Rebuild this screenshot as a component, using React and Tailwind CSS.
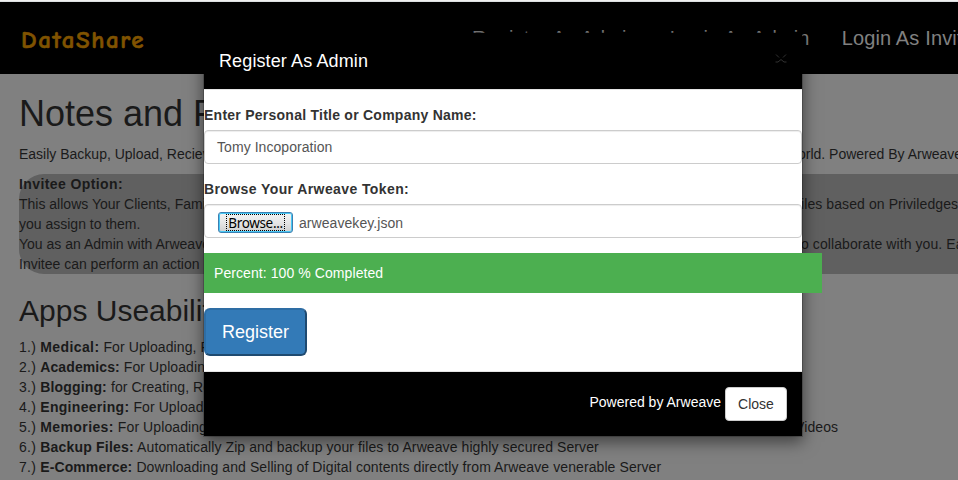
const NAV_LINKS = ["Register As Admin", "Login As Admin", "Login As Invitee"]

const INVITEE_LINES = [
  { start: "This allows Your Clients, Family, Friends", end: "files based on Priviledges" },
  { start: "you assign to them." },
  { start: "You as an Admin with Arweave Token", end: "to collaborate with you. Each" },
  { start: "Invitee can perform an action" },
]

const USES = [
  { name: "Medical:", text: "For Uploading, Recieving", tracking: "tracking-[0.4px]" },
  { name: "Academics:", text: "For Uploading", tracking: "tracking-[0.1px]" },
  { name: "Blogging:", text: "for Creating, Reading", tracking: "tracking-[0.15px]" },
  { name: "Engineering:", text: "For Uploading", tracking: "tracking-[0.3px]" },
  { name: "Memories:", text: "For Uploading", end: "Videos", tracking: "tracking-[0.4px]" },
  {
    name: "Backup Files:",
    text: "Automatically Zip and backup your files to Arweave highly secured Server",
    tracking: "tracking-[0.2px]",
  },
  {
    name: "E-Commerce:",
    text: "Downloading and Selling of Digital contents directly from Arweave venerable Server",
    tracking: "tracking-[0.1px]",
  },
]

function Navbar() {
  return (
    <nav className="h-[72px] bg-black flex items-start text-[#808080]">
      <div className="w-[472px] shrink-0 pl-[21px] pt-[22px]">
        <span className="inline-block font-['Comic_Sans_MS','Comic_Neue','Lato',sans-serif] font-bold text-[25px] leading-8 tracking-[1.6px] text-[#805300] [-webkit-text-stroke:0.6px_#805300]">
          DataShare
        </span>
      </div>
      <div className="flex gap-8 pt-[22px] text-[20px] leading-7 tracking-[0.14px] whitespace-nowrap">
        {NAV_LINKS.map((link) => (
          <a key={link}>{link}</a>
        ))}
      </div>
    </nav>
  )
}

function PageContent() {
  return (
    <main className="pl-[19px] whitespace-nowrap tracking-[0.09px]">
      <h1 className="pt-5 mb-[10px] text-[36px] leading-10 tracking-normal">Notes and Files</h1>
      <div className="flex">
        <p className="w-[766px] shrink-0 tracking-normal">Easily Backup, Upload, Recieve</p>
        <p className="tracking-normal">World. Powered By Arweave</p>
      </div>
      <div className="mt-[10px] h-[100px] bg-[#606060] rounded-l-[25px]">
        <b className="block tracking-[0.4px]">Invitee Option:</b>
        {INVITEE_LINES.map((line) => (
          <div key={line.start} className="flex">
            <p className="w-[778px] shrink-0 tracking-normal">{line.start}</p>
            {line.end && <p>{line.end}</p>}
          </div>
        ))}
      </div>
      <h2 className="mt-5 mb-[10px] text-[30px] leading-[33px] tracking-normal">Apps Useability</h2>
      {USES.map((use, i) => (
        <div key={use.name} className="flex">
          <p className={use.end ? "w-[776px] shrink-0" : ""}>
            <span className="tracking-[0.25px]">{i + 1}.) </span>
            <b className={use.tracking}>{use.name}</b> {use.text}
          </p>
          {use.end && <p>{use.end}</p>}
        </div>
      ))}
    </main>
  )
}

function Field({ label, tracking, children }) {
  return (
    <div className="mb-[15px]">
      <label className={`block mb-[5px] font-bold ${tracking}`}>{label}</label>
      <div className="h-[34px] px-3 flex items-center bg-white border border-[#ccc] rounded-[4px] text-[#555] tracking-[0.06px] shadow-[inset_0_1px_1px_rgba(0,0,0,0.075)]">
        {children}
      </div>
    </div>
  )
}

function RegisterModal() {
  return (
    <div className="absolute top-8 left-[203px] w-[600px] border border-black/20 bg-white bg-clip-padding shadow-[0_5px_15px_rgba(0,0,0,0.5)] text-[#333]">
      <div className="h-[57px] px-[15px] flex justify-between bg-black border-b border-[#e5e5e5] text-white">
        <h4 className="pt-[15px] text-[18px] leading-[26px] tracking-[0.12px]">Register As Admin</h4>
        <button className="h-[21px] mt-[15px] text-[#333]">
          <svg width="12" height="21" viewBox="0 0 12 21" fill="none" stroke="currentColor">
            <path d="M1 6.5l3 3M11 6.5l-3 3M0.5 14h2.5l3-2.5 3 2.5h2.5" />
          </svg>
        </button>
      </div>

      <div className="py-[15px]">
        <Field label="Enter Personal Title or Company Name:" tracking="tracking-[0.25px]">
          Tomy Incoporation
        </Field>
        <Field label="Browse Your Arweave Token:" tracking="tracking-[0.4px]">
          <button className="w-[75px] h-[21px] ml-px mt-[3px] p-[2px] rounded-[3px] border border-[#3c7fb1] bg-linear-to-b from-[#f4f4f4] via-[#e6e6e6] to-[#cfcfcf] shadow-[inset_0_0_0_1px_#48c8f5] text-black">
            <span className="flex justify-center h-[17px] -mt-px mx-[5px] border border-dotted border-black font-['Noto_Sans',sans-serif] text-[13.5px] leading-4 tracking-[-0.35px]">
              Browse...
            </span>
          </button>
          <span className="ml-[6px] mt-[3px]">arweavekey.json</span>
        </Field>
        <div className="relative w-[618px] h-10 mb-[15px] p-[10px] bg-[#4caf50] text-white tracking-[0.08px]">
          Percent: 100 % Completed
        </div>
        <button className="block w-[103px] h-12 rounded-[6px] border-2 border-t-[#2e6da4] border-l-[#2e6da4] border-r-[#1f4a70] border-b-[#1f4a70] bg-[#337ab7] text-white text-[18px]">
          Register
        </button>
      </div>

      <div className="h-[65px] p-[15px] flex justify-end bg-black border-t border-[#e5e5e5] text-white">
        <span className="pt-[5px] mr-1">Powered by Arweave</span>
        <button className="w-[62px] h-[34px] rounded-[4px] border border-[#ccc] bg-white text-[#333]">Close</button>
      </div>
    </div>
  )
}

export default function App() {
  return (
    <div className="relative w-[958px] h-[480px] overflow-hidden bg-[#808080] font-['Liberation_Sans',Arial,sans-serif] text-[14px] leading-5 text-[#1a1a1a]">
      <div className="h-[2px] bg-[#f0f0f0] border-b border-[#dcdfe1]" />
      <Navbar />
      <PageContent />
      <RegisterModal />
    </div>
  )
}
